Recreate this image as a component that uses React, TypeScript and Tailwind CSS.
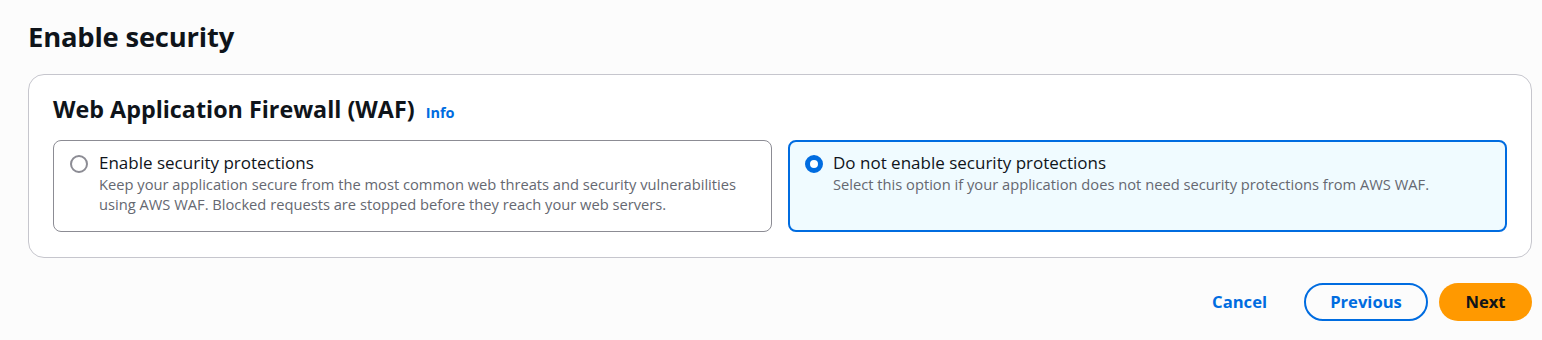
export default function App() {
  return (
    <div
      className="w-[1542px] h-[340px] bg-[#fcfcfc] text-[#0f141a] overflow-hidden"
      style={{ fontFamily: '"Open Sans", "Noto Sans", sans-serif' }}
    >
      <div className="pl-[28px] pr-[10px] pt-[18px]">
        <h1 className="text-[27.4px] leading-[38px] font-bold tracking-[-0.2px]">Enable security</h1>

        <div className="mt-[18px] bg-white border border-[#c6c6cd] rounded-[16px] px-[24px] pt-[19px] pb-[25px]">
          <div className="flex items-baseline gap-[11px]">
            <h2 className="text-[23.3px] leading-[30px] font-bold">Web Application Firewall (WAF)</h2>
            <a className="text-[14.5px] font-bold text-[#006ce0]">Info</a>
          </div>

          <div className="mt-[16px] grid grid-cols-2 gap-[16px]">
            <div className="border border-[#8c8c94] rounded-[8px] h-[92px] px-[16px] pt-[11px] flex gap-[11px]">
              <div className="mt-[3px] w-[18px] h-[18px] shrink-0 rounded-full border-2 border-[#8c8c94] bg-white" />
              <div>
                <div className="text-[17px] leading-[22px]">Enable security protections</div>
                <div className="text-[14.7px] leading-[20px] text-[#656871] whitespace-nowrap">
                  Keep your application secure from the most common web threats and security vulnerabilities
                  <br />
                  using AWS WAF. Blocked requests are stopped before they reach your web servers.
                </div>
              </div>
            </div>

            <div className="border-2 border-[#006ce0] bg-[#f0fbff] rounded-[8px] h-[92px] px-[15px] pt-[10px] flex gap-[10px]">
              <div className="mt-[3px] w-[18px] h-[18px] shrink-0 rounded-full border-[5px] border-[#006ce0] bg-white" />
              <div>
                <div className="text-[17px] leading-[22px]">Do not enable security protections</div>
                <div className="text-[14.7px] leading-[20px] text-[#656871] whitespace-nowrap">
                  Select this option if your application does not need security protections from AWS WAF.
                </div>
              </div>
            </div>
          </div>
        </div>

        <div className="mt-[25px] flex justify-end items-center gap-[11px]">
          <button className="px-[18px] h-[38px] text-[16.6px] font-bold text-[#006ce0]">Cancel</button>
          <button className="ml-[8px] w-[124px] h-[38px] rounded-full border-2 border-[#006ce0] text-[16.6px] font-bold text-[#006ce0]">
            Previous
          </button>
          <button className="w-[93px] h-[38px] rounded-full bg-[#ff9900] text-[16.6px] font-bold text-[#0f141a]">
            Next
          </button>
        </div>
      </div>
    </div>
  );
}
